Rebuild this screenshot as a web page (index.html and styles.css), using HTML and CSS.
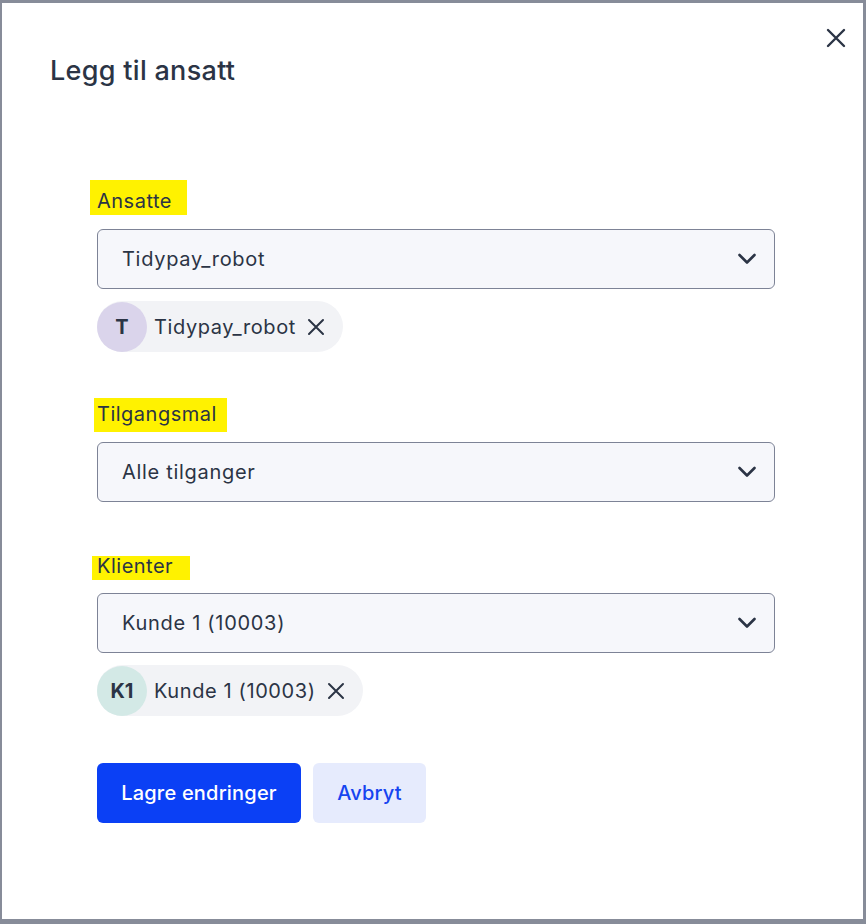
FILE: index.html
```html
<!DOCTYPE html>
<html lang="no">
<head>
    <meta charset="UTF-8">
    <meta name="viewport" content="width=device-width, initial-scale=1.0">
    <title>Legg til ansatt</title>
    <link rel="stylesheet" href="styles.css">
</head>
<body>
    <div class="dialog">
        <button class="close" type="button" aria-label="Lukk">
            <svg width="20" height="20" viewBox="0 0 20 20"><path d="M2 2L18 18M18 2L2 18" stroke="#2b3445" stroke-width="2.4" stroke-linecap="round"/></svg>
        </button>

        <h1 class="title">Legg til ansatt</h1>

        <form class="form">
            <div class="field field-ansatte">
                <div class="label"><span class="mark mark-ansatte">Ansatte</span></div>
                <div class="select select-ansatte">
                    <span>Tidypay_robot</span>
                    <svg class="chevron" width="18" height="12" viewBox="0 0 18 12"><path d="M1.5 2L9 9.5L16.5 2" fill="none" stroke="#2b3445" stroke-width="2.6" stroke-linecap="round" stroke-linejoin="round"/></svg>
                </div>
                <div class="chip">
                    <span class="avatar avatar-purple">T</span>
                    <span class="chip-text">Tidypay_robot</span>
                    <svg class="chip-x" width="18" height="18" viewBox="0 0 18 18"><path d="M2 2L16 16M16 2L2 16" stroke="#2b3445" stroke-width="2" stroke-linecap="round"/></svg>
                </div>
            </div>

            <div class="field field-tilgang">
                <div class="label"><span class="mark mark-tilgang">Tilgangsmal</span></div>
                <div class="select select-tilgang">
                    <span>Alle tilganger</span>
                    <svg class="chevron" width="18" height="12" viewBox="0 0 18 12"><path d="M1.5 2L9 9.5L16.5 2" fill="none" stroke="#2b3445" stroke-width="2.6" stroke-linecap="round" stroke-linejoin="round"/></svg>
                </div>
            </div>

            <div class="field field-klienter">
                <div class="label"><span class="mark mark-klienter">Klienter</span></div>
                <div class="select select-klienter">
                    <span>Kunde 1 (10003)</span>
                    <svg class="chevron" width="18" height="12" viewBox="0 0 18 12"><path d="M1.5 2L9 9.5L16.5 2" fill="none" stroke="#2b3445" stroke-width="2.6" stroke-linecap="round" stroke-linejoin="round"/></svg>
                </div>
                <div class="chip">
                    <span class="avatar avatar-teal">K1</span>
                    <span class="chip-text">Kunde 1 (10003)</span>
                    <svg class="chip-x" width="18" height="18" viewBox="0 0 18 18"><path d="M2 2L16 16M16 2L2 16" stroke="#2b3445" stroke-width="2" stroke-linecap="round"/></svg>
                </div>
            </div>

            <div class="actions">
                <button class="button button-primary" type="submit">Lagre endringer</button>
                <button class="button button-secondary" type="button">Avbryt</button>
            </div>
        </form>
    </div>
</body>
</html>
```

FILE: styles.css
```css
body {
    margin: 0;
    background-color: #878c99;
    font-family: Inter, "Noto Sans", sans-serif;
    color: #2b3445;
}
.dialog {
    position: relative;
    box-sizing: border-box;
    margin: 3px 3px 0 2px;
    height: 916px;
    background: #ffffff;
    padding: 52px 0 0 48px;
}
.close {
    position: absolute;
    top: 25px;
    right: 17px;
    padding: 0;
    border: none;
    background: none;
    cursor: pointer;
    display: flex;
}
.title {
    margin: 0;
    font-size: 27px;
    line-height: 32px;
    font-weight: 500;
    letter-spacing: 0.3px;
}
.form {
    width: 678px;
    margin-left: 47px;
}
.field-ansatte {
    margin-top: 93px;
}
.field-tilgang {
    margin-top: 46px;
}
.field-klienter {
    margin-top: 54px;
}
.label {
    display: flex;
}
.mark {
    background: #fff200;
    font-size: 20px;
    line-height: 23px;
    letter-spacing: 0.5px;
}
.mark-ansatte {
    margin-left: -7px;
    padding: 10px 15px 2px 7px;
}
.mark-tilgang {
    margin-left: -3px;
    padding: 5px 10px 6px 3px;
}
.mark-klienter {
    margin-left: -5px;
    padding: 0 17px 4px 5px;
    line-height: 20px;
}
.select {
    box-sizing: border-box;
    height: 60px;
    display: flex;
    align-items: center;
    justify-content: space-between;
    padding: 0 18px 0 24px;
    border: 1px solid #7d8396;
    border-radius: 6px;
    background: #f6f7fb;
    font-size: 20px;
    letter-spacing: 0.7px;
}
.select-ansatte {
    margin-top: 14px;
}
.select-tilgang {
    margin-top: 10px;
}
.select-klienter {
    margin-top: 13px;
}
.chip {
    margin-top: 12px;
    display: inline-flex;
    align-items: center;
    height: 51px;
    border-radius: 26px;
    background: #f2f3f6;
    padding-right: 18px;
    font-size: 20px;
    letter-spacing: 0.6px;
}
.avatar {
    width: 50px;
    height: 50px;
    border-radius: 50%;
    display: flex;
    align-items: center;
    justify-content: center;
    font-weight: 700;
    font-size: 20px;
    letter-spacing: 0;
}
.avatar-purple {
    background: #dad4eb;
}
.avatar-teal {
    background: #d3e9e6;
}
.chip-text {
    margin-left: 7px;
}
.chip-x {
    margin-left: 11px;
}
.actions {
    margin-top: 47px;
    display: flex;
    gap: 12px;
}
.button {
    height: 60px;
    border: none;
    border-radius: 6px;
    font-family: Inter, "Noto Sans", sans-serif;
    font-size: 20px;
    font-weight: 500;
    letter-spacing: 0.2px;
    cursor: pointer;
}
.button-primary {
    width: 204px;
    background: #0b40f5;
    color: #ffffff;
}
.button-secondary {
    width: 113px;
    background: #e6ebfd;
    color: #1544f0;
}
```
